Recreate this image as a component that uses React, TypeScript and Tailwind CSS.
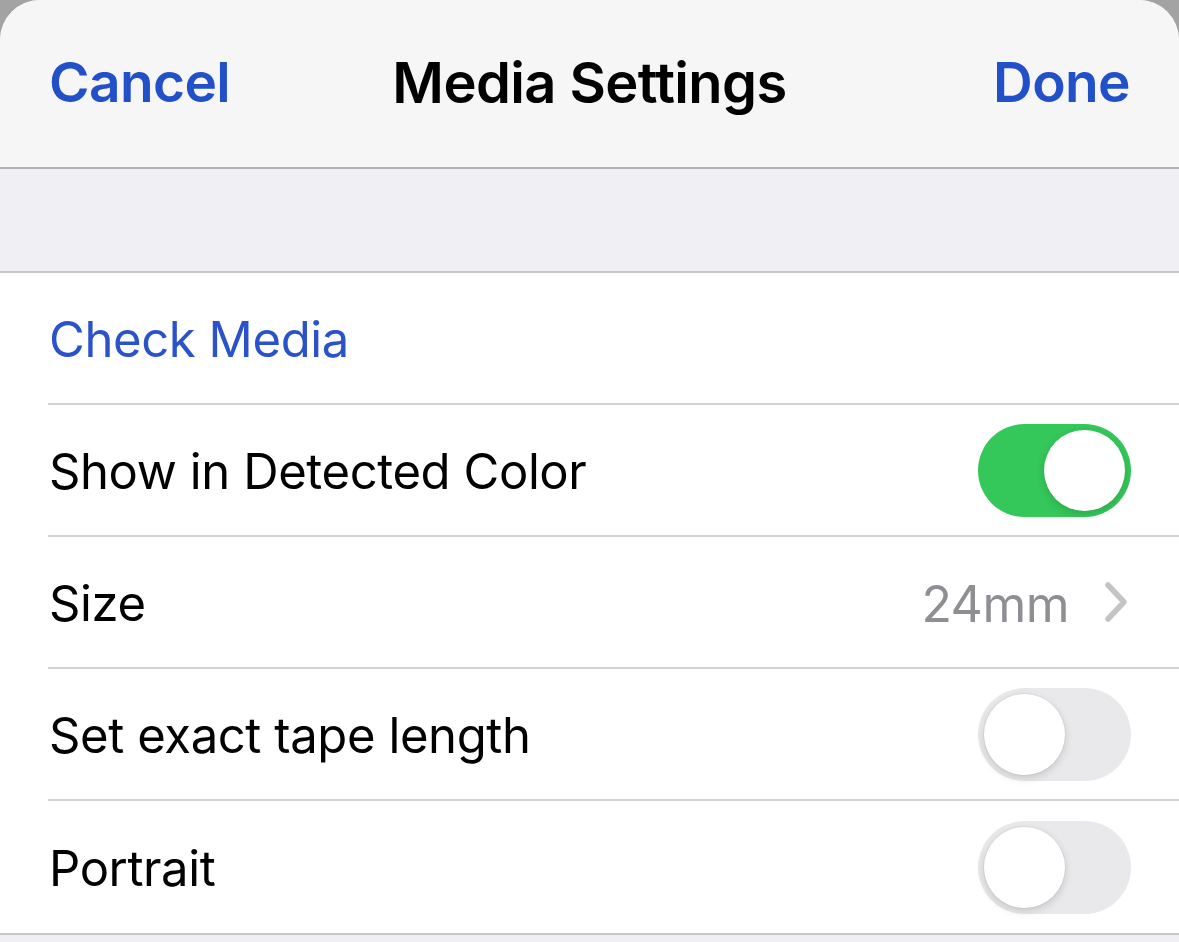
import React from "react";

function Toggle({ on }: { on: boolean }) {
  if (on) {
    return (
      <div className="w-[153px] h-[93px] rounded-full bg-[#34c759] flex items-center justify-end px-[6px]">
        <div className="w-[81px] h-[81px] rounded-full bg-white shadow-[0_3px_8px_rgba(0,0,0,0.15)]" />
      </div>
    );
  }
  return (
    <div className="w-[153px] h-[93px] rounded-full bg-[#e9e9eb] flex items-center justify-start px-[6px]">
      <div className="w-[81px] h-[81px] rounded-full bg-white shadow-[0_3px_8px_rgba(0,0,0,0.15),0_0_0_1px_rgba(0,0,0,0.04)]" />
    </div>
  );
}

function Row({ children, last }: { children: React.ReactNode; last?: boolean }) {
  return (
    <div className="pl-[48px]">
      <div
        className={
          "h-[132px] flex items-center justify-between pr-[48px] " +
          (last ? "" : "border-b-2 border-[#d1d1d6]")
        }
      >
        {children}
      </div>
    </div>
  );
}

export default function App() {
  return (
    <div
      className="w-[1179px] h-[942px] bg-[#a3a3a3] overflow-hidden"
      style={{ fontFamily: "Inter, 'Noto Sans', sans-serif" }}
    >
      <div className="h-full bg-[#efeff4] rounded-t-[40px] overflow-hidden">
        {/* Nav bar */}
        <div className="h-[169px] bg-[#f6f6f7] border-b-2 border-[#b2b2b6] grid grid-cols-[1fr_auto_1fr] items-center px-[49px] pb-[2px]">
          <span className="justify-self-start text-[55px] font-semibold text-[#2250c8] tracking-[-0.6px]">Cancel</span>
          <span className="text-[56px] font-semibold text-black tracking-[-0.6px]">Media Settings</span>
          <span className="justify-self-end text-[55px] font-semibold text-[#2250c8] tracking-[-0.6px]">Done</span>
        </div>

        <div className="h-[104px] border-b-2 border-[#c8c8cc]" />

        <div className="bg-white border-b-2 border-[#c8c8cc]">
          <Row>
            <span className="text-[49px] text-[#2a52c9] tracking-[-0.4px] pl-[1px] pt-[4px]">Check Media</span>
          </Row>
          <Row>
            <span className="text-[49px] text-black tracking-[-0.4px] pl-[1px] pt-[4px]">Show in Detected Color</span>
            <Toggle on />
          </Row>
          <Row>
            <span className="text-[49px] text-black tracking-[-0.4px] pl-[1px] pt-[4px]">Size</span>
            <div className="flex items-center gap-[34px]">
              <span className="text-[50px] text-[#8e8e93] tracking-[-0.5px] pt-[4px]">24mm</span>
              <svg width="26" height="42" viewBox="0 0 26 42" className="mr-[2px]">
                <path d="M5 4 L21 21 L5 38" fill="none" stroke="#c4c4c7" strokeWidth="5.5" strokeLinecap="round" strokeLinejoin="round" />
              </svg>
            </div>
          </Row>
          <Row>
            <span className="text-[49px] text-black tracking-[-0.4px] pl-[1px] pt-[4px]">Set exact tape length</span>
            <Toggle on={false} />
          </Row>
          <Row last>
            <span className="text-[49px] text-black tracking-[-0.4px] pl-[1px] pt-[4px]">Portrait</span>
            <Toggle on={false} />
          </Row>
        </div>
      </div>
    </div>
  );
}
